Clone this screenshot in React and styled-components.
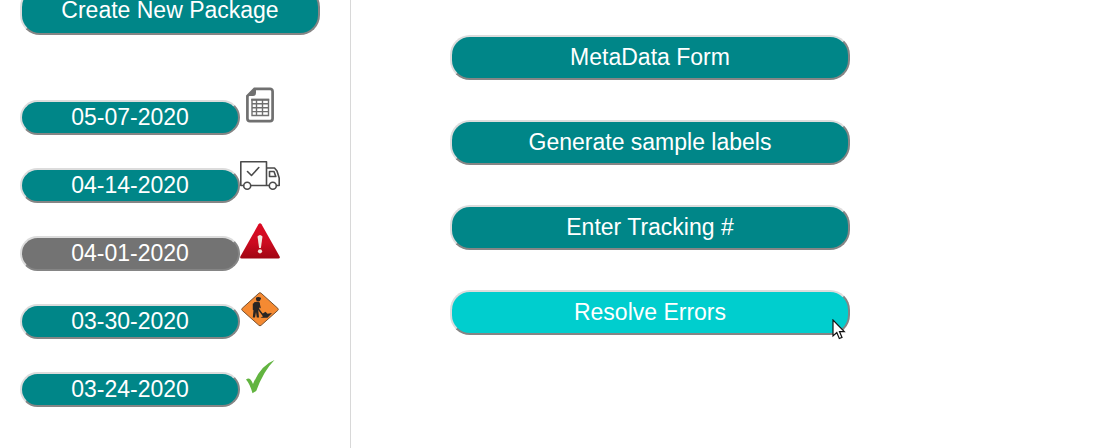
import React from "react";
import styled, { createGlobalStyle } from "styled-components";

const GlobalStyle = createGlobalStyle`
  *, *::before, *::after { box-sizing: border-box; }
  body {
    margin: 0;
    background: #fff;
    font-family: "Liberation Sans", Arial, sans-serif;
  }
`;

const Page = styled.div`
  display: flex;
  min-height: 100vh;
  overflow: hidden;
`;

const Sidebar = styled.aside`
  flex: 0 0 351px;
  padding: 0 30px 40px 20px;
  border-right: 1px solid #d8d8d8;
`;

const Main = styled.main`
  flex: 1;
  display: flex;
  flex-direction: column;
  gap: 40px;
  padding: 35px 99px;
`;

const PillButton = styled.button`
  width: 100%;
  max-width: 400px;
  height: 45px;
  padding: 0 0 2px;
  border: 2px solid;
  border-color: #dcdcdc #858585 #858585 #dcdcdc;
  border-radius: 20px;
  background: ${({ $active }) => ($active ? "#00cece" : "#008688")};
  color: #fff;
  font-family: inherit;
  font-size: 23px;
  line-height: 26px;
  text-align: center;
  cursor: pointer;
`;

const CreateButton = styled(PillButton)`
  display: block;
  height: 48px;
  margin-top: -13px;
`;

const DateButton = styled(PillButton)`
  width: 220px;
  height: 35px;
  background: ${({ $selected }) => ($selected ? "#737373" : "#008688")};
`;

const PackageList = styled.ul`
  display: flex;
  flex-direction: column;
  gap: 18px;
  margin: 50px 0 0;
  padding: 0;
  list-style: none;
`;

const PackageRow = styled.li`
  display: flex;
  align-items: flex-end;
  height: 50px;
`;

const StatusIcon = styled.svg`
  align-self: flex-start;
  flex: none;
  width: 40px;
  height: 40px;
`;

const ActionSlot = styled.div`
  position: relative;
  display: flex;
  max-width: 400px;
`;

const Pointer = styled.svg`
  position: absolute;
  right: 2px;
  bottom: -6px;
  width: 16px;
  height: 22px;
  pointer-events: none;
`;

const FormIcon = () => (
  <StatusIcon viewBox="0 0 40 40" role="img" aria-label="Form">
    <path d="M14.5 3.8H30a2.600 2.600 0 0 1 2.600 2.600V33.600a2.600 2.600 0 0 1-2.600 2.600H10a2.600 2.600 0 0 1-2.600-2.600V11z" fill="#fff" stroke="#707070" strokeWidth="2.700" />
    <path d="M7 11 14.500 3.500H16V8a3 3 0 0 1-3 3z" fill="#707070" />
    <path d="M12 14.500H28.500V30.500H12zM12 18.800H28.500M12 22.700H28.500M12 26.600H28.500M16.500 14.500V30.500M22.500 14.500V30.500" fill="none" stroke="#707070" strokeWidth="1.400" />
    <path d="M11.300 14.800H29.200" stroke="#707070" strokeWidth="2" />
  </StatusIcon>
);

const TruckIcon = () => (
  <StatusIcon viewBox="0 0 40 40" role="img" aria-label="Shipped">
    <g fill="none" stroke="#4b4b4b" strokeWidth="1.600" strokeLinejoin="round" strokeLinecap="round">
      <path d="M3.500 32.500H.8V8.700H26.500V32.500H10.700M26.500 15H34.500L37 18 39.200 25V32.500H36.700M29 32.500H26.500" />
      <path d="M29.500 18.500H34L35.800 23.500H29.500z" />
      <circle cx="7.200" cy="32.700" r="3.500" />
      <circle cx="32.800" cy="32.700" r="3.500" />
      <path d="M7.500 18.500 11.500 22.500 18.800 14.500" />
    </g>
  </StatusIcon>
);

const WarningIcon = () => (
  <StatusIcon viewBox="0 0 40 40" role="img" aria-label="Error">
    <defs>
      <linearGradient id="warning-red" x2="0" y2="1">
        <stop offset="0" stopColor="#dc0a22" />
        <stop offset="0.550" stopColor="#cc0b20" />
        <stop offset="1" stopColor="#a00613" />
      </linearGradient>
    </defs>
    <path d="M18.500 3.300Q20 1 21.500 3.300L39.400 35Q40.700 37.500 38.300 37.500H1.700Q-.7 37.500.6 35z" fill="url(#warning-red)" />
    <path d="M17.500 15.500Q20 12.500 22.500 15.500L20.900 27H19.100z" fill="#f3e8df" />
    <circle cx="20" cy="30.300" r="2.100" fill="#f3e8df" />
  </StatusIcon>
);

const WorksIcon = () => (
  <StatusIcon viewBox="0 0 40 40" role="img" aria-label="In progress">
    <path d="M18.900 4.200Q20 3.200 21.100 4.200L37.800 19.300Q38.800 20.400 37.800 21.400L21.100 36.300Q20 37.300 18.900 36.300L2.200 21.400Q1.200 20.400 2.200 19.300z" fill="#f58a32" stroke="#795230" strokeWidth="1" />
    <circle cx="18.300" cy="10.300" r="2.200" fill="#292524" />
    <path d="M16 9.300H21" stroke="#292524" strokeWidth="1.300" />
    <path d="M14 13.500Q17 12 19.800 13.500L19 19.500 18.300 21.500 19 28.500H16.800L16 23 15 28.500H12.800L13.500 21 13 18z" fill="#292524" />
    <path d="M19 14.500 20 18.500M13.500 15V20.500M16.500 17.500 24 27.500" fill="none" stroke="#292524" strokeWidth="1.400" strokeLinecap="round" />
    <path d="M20.500 28.800 23.500 27 22 25 25.500 22.800 27.500 24.800 32 24 27.500 28.800z" fill="#292524" />
  </StatusIcon>
);

const DoneIcon = () => (
  <StatusIcon viewBox="0 0 40 40" role="img" aria-label="Complete">
    <path d="M6 22.500Q8.500 20.500 10.500 22.500 12 24 13 27 20.500 8.500 34.500 3 23.500 14 16.200 34L12.500 36.300Q10 27 6 22.500z" fill="#62b440" />
  </StatusIcon>
);

const packages = [
  { date: "05-07-2020", Icon: FormIcon },
  { date: "04-14-2020", Icon: TruckIcon },
  { date: "04-01-2020", Icon: WarningIcon, selected: true },
  { date: "03-30-2020", Icon: WorksIcon },
  { date: "03-24-2020", Icon: DoneIcon },
];

const actions = ["MetaData Form", "Generate sample labels", "Enter Tracking #"];

export default function App() {
  return (
    <>
      <GlobalStyle />
      <Page>
        <Sidebar>
          <CreateButton type="button">Create New Package</CreateButton>
          <PackageList>
            {packages.map(({ date, Icon, selected }) => (
              <PackageRow key={date}>
                <DateButton type="button" $selected={selected}>{date}</DateButton>
                <Icon />
              </PackageRow>
            ))}
          </PackageList>
        </Sidebar>
        <Main>
          {actions.map((label) => (
            <PillButton key={label} type="button">{label}</PillButton>
          ))}
          <ActionSlot>
            <PillButton type="button" $active>Resolve Errors</PillButton>
            <Pointer viewBox="0 0 16 22" aria-hidden="true">
              <path d="M1 1V17L4.800 13.500 7.300 19.500 10 18.400 7.500 12.600H12.300z" fill="#fff" stroke="#111" strokeWidth="1.200" />
            </Pointer>
          </ActionSlot>
        </Main>
      </Page>
    </>
  );
}
